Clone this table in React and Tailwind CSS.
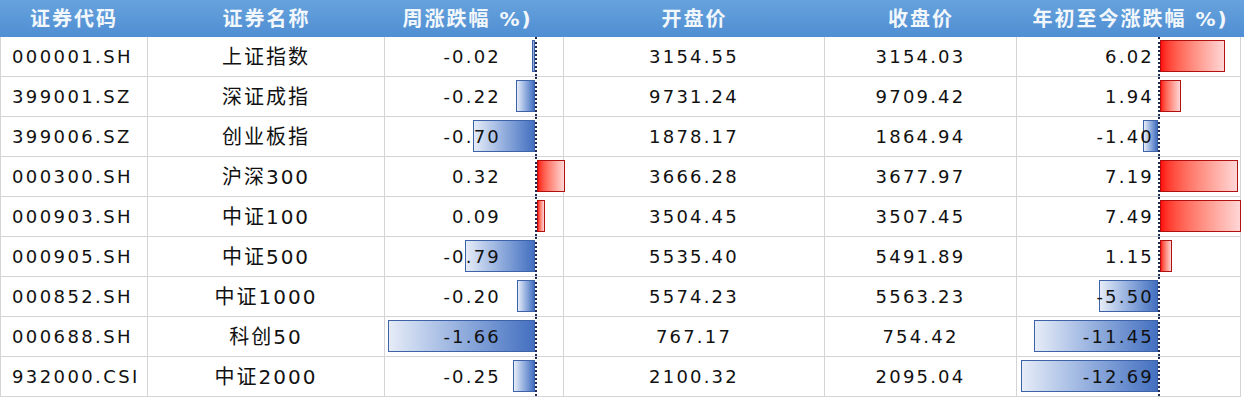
import clsx from 'clsx'

const rows = [
  ['000001.SH', '上证指数', -0.02, '3154.55', '3154.03', 6.02],
  ['399001.SZ', '深证成指', -0.22, '9731.24', '9709.42', 1.94],
  ['399006.SZ', '创业板指', -0.7, '1878.17', '1864.94', -1.4],
  ['000300.SH', '沪深300', 0.32, '3666.28', '3677.97', 7.19],
  ['000903.SH', '中证100', 0.09, '3504.45', '3507.45', 7.49],
  ['000905.SH', '中证500', -0.79, '5535.40', '5491.89', 1.15],
  ['000852.SH', '中证1000', -0.2, '5574.23', '5563.23', -5.5],
  ['000688.SH', '科创50', -1.66, '767.17', '754.42', -11.45],
  ['932000.CSI', '中证2000', -0.25, '2100.32', '2095.04', -12.69],
]

const headers = ['证券代码', '证券名称', '周涨跌幅 %)', '开盘价', '收盘价', '年初至今涨跌幅 %)']

// data bar cell, axis = px from cell's left edge
function BarCell({ value, axis, scale, className, textClass, axisClass }) {
  const w = Math.max(Math.abs(value) * scale, 3)
  const neg = value < 0
  return (
    <div className={clsx('relative h-full border-r border-b border-[#d4d4d4] flex items-center justify-end', className)}>
      <div
        className={clsx(
          'absolute top-[3px] h-[32px] border',
          neg
            ? 'bg-gradient-to-r from-[#e6ecf7] to-[#4470c0] border-[#3d62a8]'
            : 'bg-gradient-to-r from-[#ff0a0a] to-[#ffd6d6] border-[#b01010]'
        )}
        style={neg ? { left: axis - w, width: w } : { left: axis + 2, width: w }}
      />
      <span className={clsx('relative z-10', textClass)}>{value.toFixed(2)}</span>
      <div className={clsx('absolute top-0 bottom-0 w-0 border-l-2 border-dotted border-[#1c2a55] z-20', axisClass)} />
    </div>
  )
}

export default function App() {
  return (
    <div
      className="w-[1244px] h-[400px] bg-white overflow-hidden text-[#111]"
      style={{ fontFamily: '"DejaVu Sans", "Noto Sans CJK SC", sans-serif' }}
    >
      <div className="grid grid-cols-[148px_237px_179px_261px_192px_227px] h-[37px] bg-gradient-to-b from-[#66a2dc] to-[#4f8ed3]">
        {headers.map((h, i) => (
          <div
            key={h}
            className={clsx(
              'flex items-center justify-center text-[20px] font-bold tracking-[2px] text-[#f2f7fc]',
              i === 2 && 'pr-[14px]'
            )}
          >
            {h}
          </div>
        ))}
      </div>
      <div className="w-[1241px] border-l border-[#d4d4d4]">
        {rows.map(r => (
          <div key={r[0]} className="grid grid-cols-[147px_237px_179px_261px_192px_224px] h-[40px] text-[18px] tracking-[2.2px]">
            <div className="flex items-center pl-[11px] tracking-[2.4px] border-r border-b border-[#d4d4d4]">{r[0]}</div>
            <div className="flex items-center justify-center border-r border-b border-[#d4d4d4] text-[20px] tracking-[2px]">{r[1]}</div>
            <BarCell value={r[2]} axis={150} scale={88.5} textClass="pr-[62px]" axisClass="left-[150px]" />
            <div className="flex items-center justify-center border-r border-b border-[#d4d4d4]">{r[3]}</div>
            <div className="flex items-center justify-center border-r border-b border-[#d4d4d4]">{r[4]}</div>
            <BarCell value={r[5]} axis={141} scale={10.8} textClass="pr-[86px]" axisClass="left-[141px]" />
          </div>
        ))}
      </div>
    </div>
  )
}
